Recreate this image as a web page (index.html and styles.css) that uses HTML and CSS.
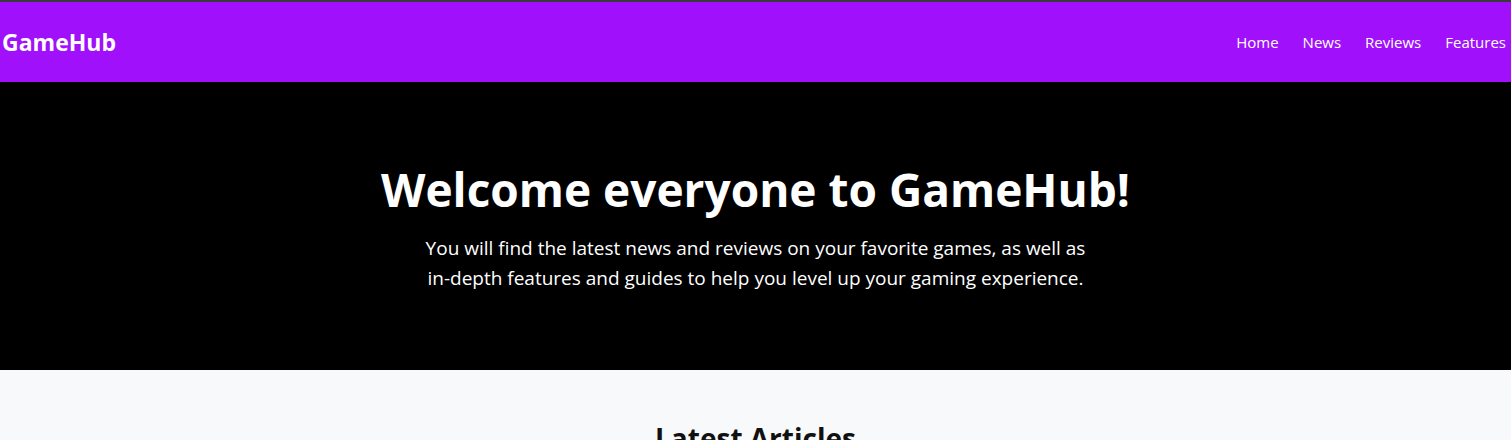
FILE: index.html
```html
<!DOCTYPE html>
<html lang="en">
<head>
<meta charset="utf-8">
<title>GameHub</title>
<link rel="stylesheet" href="styles.css">
</head>
<body>
<header class="site-header">
  <div class="brand">GameHub</div>
  <nav class="nav">
    <a href="#" class="nav-link">Home</a>
    <a href="#" class="nav-link">News</a>
    <a href="#" class="nav-link">Reviews</a>
    <a href="#" class="nav-link">Features</a>
  </nav>
</header>
<section class="hero">
  <h1 class="hero-title">Welcome everyone to GameHub!</h1>
  <p class="hero-text">You will find the latest news and reviews on your favorite games, as well as in-depth features and guides to help you level up your gaming experience.</p>
</section>
<section class="articles">
  <h2 class="articles-title">Latest Articles</h2>
</section>
</body>
</html>
```
FILE: styles.css
```css
* { box-sizing: border-box; }
html, body { margin: 0; padding: 0; }
body {
  font-family: "Open Sans", "Noto Sans", sans-serif;
  background: #f8f9fa;
  border-top: 2px solid #3a3a3a;
}
.site-header {
  height: 80px;
  background: #a010fa;
  display: flex;
  align-items: center;
  justify-content: space-between;
  padding: 0 5px 0 2px;
}
.brand {
  color: #fff;
  font-weight: 700;
  font-size: 23px;
}
.nav {
  display: flex;
  gap: 24px;
}
.nav-link {
  color: #fff;
  text-decoration: none;
  font-size: 15px;
}
.hero {
  background: #000;
  color: #fff;
  height: 288px;
  display: flex;
  flex-direction: column;
  align-items: center;
  padding-top: 80px;
}
.hero-title {
  margin: 0 0 16px;
  font-size: 46px;
  font-weight: 700;
  line-height: 55px;
}
.hero-text {
  margin: 0;
  max-width: 670px;
  text-align: center;
  font-size: 19px;
  line-height: 30px;
}
.articles {
  padding-top: 49px;
  text-align: center;
}
.articles-title {
  margin: 0;
  font-size: 28px;
  font-weight: 700;
  color: #111;
}
```
